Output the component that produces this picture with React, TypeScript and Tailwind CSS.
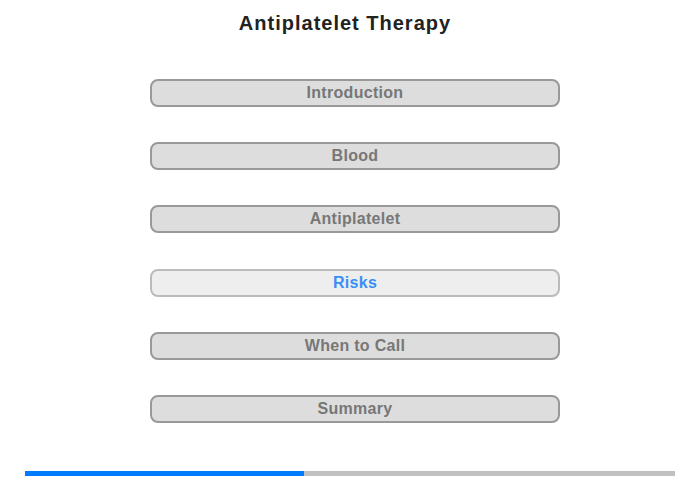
const items = ["Introduction", "Blood", "Antiplatelet", "Risks", "When to Call", "Summary"]

export default function App() {
  const active = "Risks"

  return (
    <div className="flex h-[480px] w-[700px] flex-col bg-white font-['Liberation_Sans',Arial,sans-serif]">
      <h1 className="pt-[11px] pr-[10px] text-center text-[20px] leading-6 font-bold tracking-[1px] text-[#222222]">
        Antiplatelet Therapy
      </h1>
      <div className="mt-[44px] flex flex-col items-center gap-[35px] pl-[10px]">
        {items.map((item) => (
          <button
            key={item}
            className={`h-[28px] w-[410px] rounded-[8px] border-2 text-[16px] leading-none font-bold tracking-[0.3px] ${
              item === active
                ? "mt-px border-[#bbbbbb] bg-[#eeeeee] text-[#3a8ef6]"
                : "border-[#999999] bg-[#dddddd] text-[#777777]"
            }`}
          >
            {item}
          </button>
        ))}
      </div>
      <div className="mx-[25px] mt-auto mb-[4px] flex h-[5px]">
        <div className="w-[279px] bg-[#007aff]" />
        <div className="flex-1 bg-[#c0c0c0]" />
      </div>
    </div>
  )
}
